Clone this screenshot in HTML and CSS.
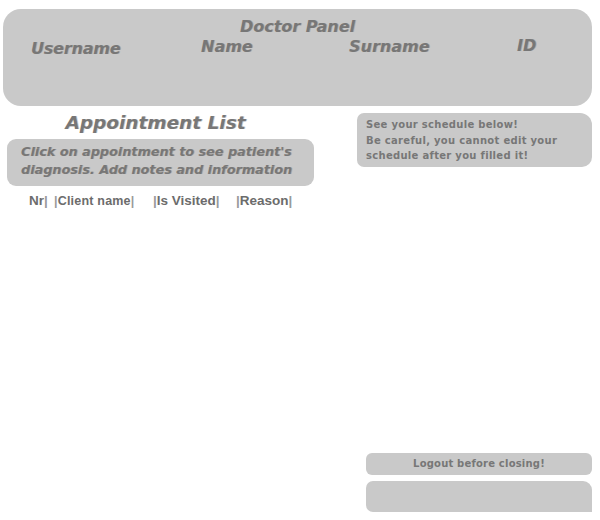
FILE: index.html
```html
<!DOCTYPE html>
<html>
<head>
<meta charset="utf-8">
<link rel="stylesheet" href="styles.css">
</head>
<body>
<header class="panel">
  <h1 class="panel-title">Doctor Panel</h1>
  <div class="fields">
    <span class="field f-user">Username</span>
    <span class="field f-name">Name</span>
    <span class="field f-surname">Surname</span>
    <span class="field f-id">ID</span>
  </div>
</header>
<main class="main">
  <section class="list">
    <h2 class="list-title">Appointment List</h2>
    <div class="hint">Click on appointment to see patient's diagnosis. Add notes and information</div>
    <div class="cols">
      <span class="c-nr">Nr<i>|</i></span>
      <span class="c-client"><i>|</i>Client name<i>|</i></span>
      <span class="c-visited"><i>|</i>Is Visited<i>|</i></span>
      <span class="c-reason"><i>|</i>Reason<i>|</i></span>
    </div>
  </section>
  <aside class="side">
    <div class="schedule">See your schedule below!<br>Be careful, you cannot edit your schedule after you filled it!</div>
    <div class="logout">Logout before closing!</div>
    <div class="blank"></div>
  </aside>
</main>
</body>
</html>
```
FILE: styles.css
```css
html, body { margin: 0; padding: 0; background: #fff; }
body { font-family: "DejaVu Sans", Verdana, sans-serif; color: #777; width: 600px; height: 520px; overflow: hidden; }

.panel {
  margin: 9px 8px 0 3px;
  height: 97px;
  background: #c9c9c9;
  border-radius: 18px;
  box-sizing: border-box;
  padding-top: 8px;
}
.panel-title {
  margin: 0;
  text-align: center;
  font-size: 16px;
  font-weight: bold;
  font-style: oblique;
  line-height: 19px;
  color: #777;
  text-shadow: 1px 0 0 rgba(130,110,90,0.35);
}
.fields { display: flex; height: 24px; }
.field {
  font-size: 16px;
  font-weight: bold;
  font-style: oblique;
  color: #777;
  text-shadow: 1px 0 0 rgba(130,110,90,0.35);
  line-height: 20px;
}
.f-user { margin-left: 28px; margin-top: 3px; width: 170px; letter-spacing: -0.2px; }
.f-name { width: 148px; margin-top: 1px; }
.f-surname { width: 168px; margin-top: 1px; }
.f-id { margin-top: 0; }

.main { display: flex; }
.list { width: 307px; margin-left: 7px; }
.list-title {
  margin: 5px 0 0;
  text-align: center;
  padding-right: 10px;
  font-size: 18.5px;
  font-weight: bold;
  font-style: oblique;
  color: #777;
  line-height: 24px;
  text-shadow: 1px 0 0 rgba(130,110,90,0.35);
}
.hint {
  margin-top: 4px;
  height: 47px;
  box-sizing: border-box;
  background: #c9c9c9;
  border-radius: 9px;
  padding: 4px 0 0 14px;
  font-size: 12.8px;
  font-weight: bold;
  font-style: oblique;
  line-height: 18px;
  color: #777;
  text-shadow: 1px 0 0 rgba(130,110,90,0.35);
}
.cols {
  display: flex;
  margin-top: 7px;
  padding-left: 22px;
  font-family: "Liberation Sans", Arial, sans-serif;
  font-weight: bold;
  font-size: 13.5px;
  color: #6c6c6c;
  line-height: 16px;
}
.cols i { font-style: normal; color: #9a9a9a; }
.c-nr { width: 25px; }
.c-client { width: 99px; font-size: 12.5px; letter-spacing: 0.2px; }
.c-visited { width: 83px; }

.side {
  margin-left: 43px;
  width: 235px;
  height: 414px;
  display: flex;
  flex-direction: column;
}
.schedule {
  margin-top: 7px;
  height: 54px;
  box-sizing: border-box;
  background: #c9c9c9;
  border-radius: 7px 12px 10px 7px;
  padding: 4px 0 0 9px;
  font-size: 10px;
  font-weight: bold;
  line-height: 15.5px;
  color: #777;
  letter-spacing: 0.3px;
}
.logout {
  margin-top: auto;
  margin-left: 9px;
  height: 22px;
  background: #c9c9c9;
  border-radius: 6px;
  text-align: center;
  font-size: 10px;
  font-weight: bold;
  line-height: 22px;
  color: #777;
  letter-spacing: 0.2px;
}
.blank {
  margin-top: 6px;
  margin-left: 9px;
  height: 31px;
  background: #c9c9c9;
  border-radius: 7px 9px 0 7px;
  margin-bottom: 8px;
}
```
